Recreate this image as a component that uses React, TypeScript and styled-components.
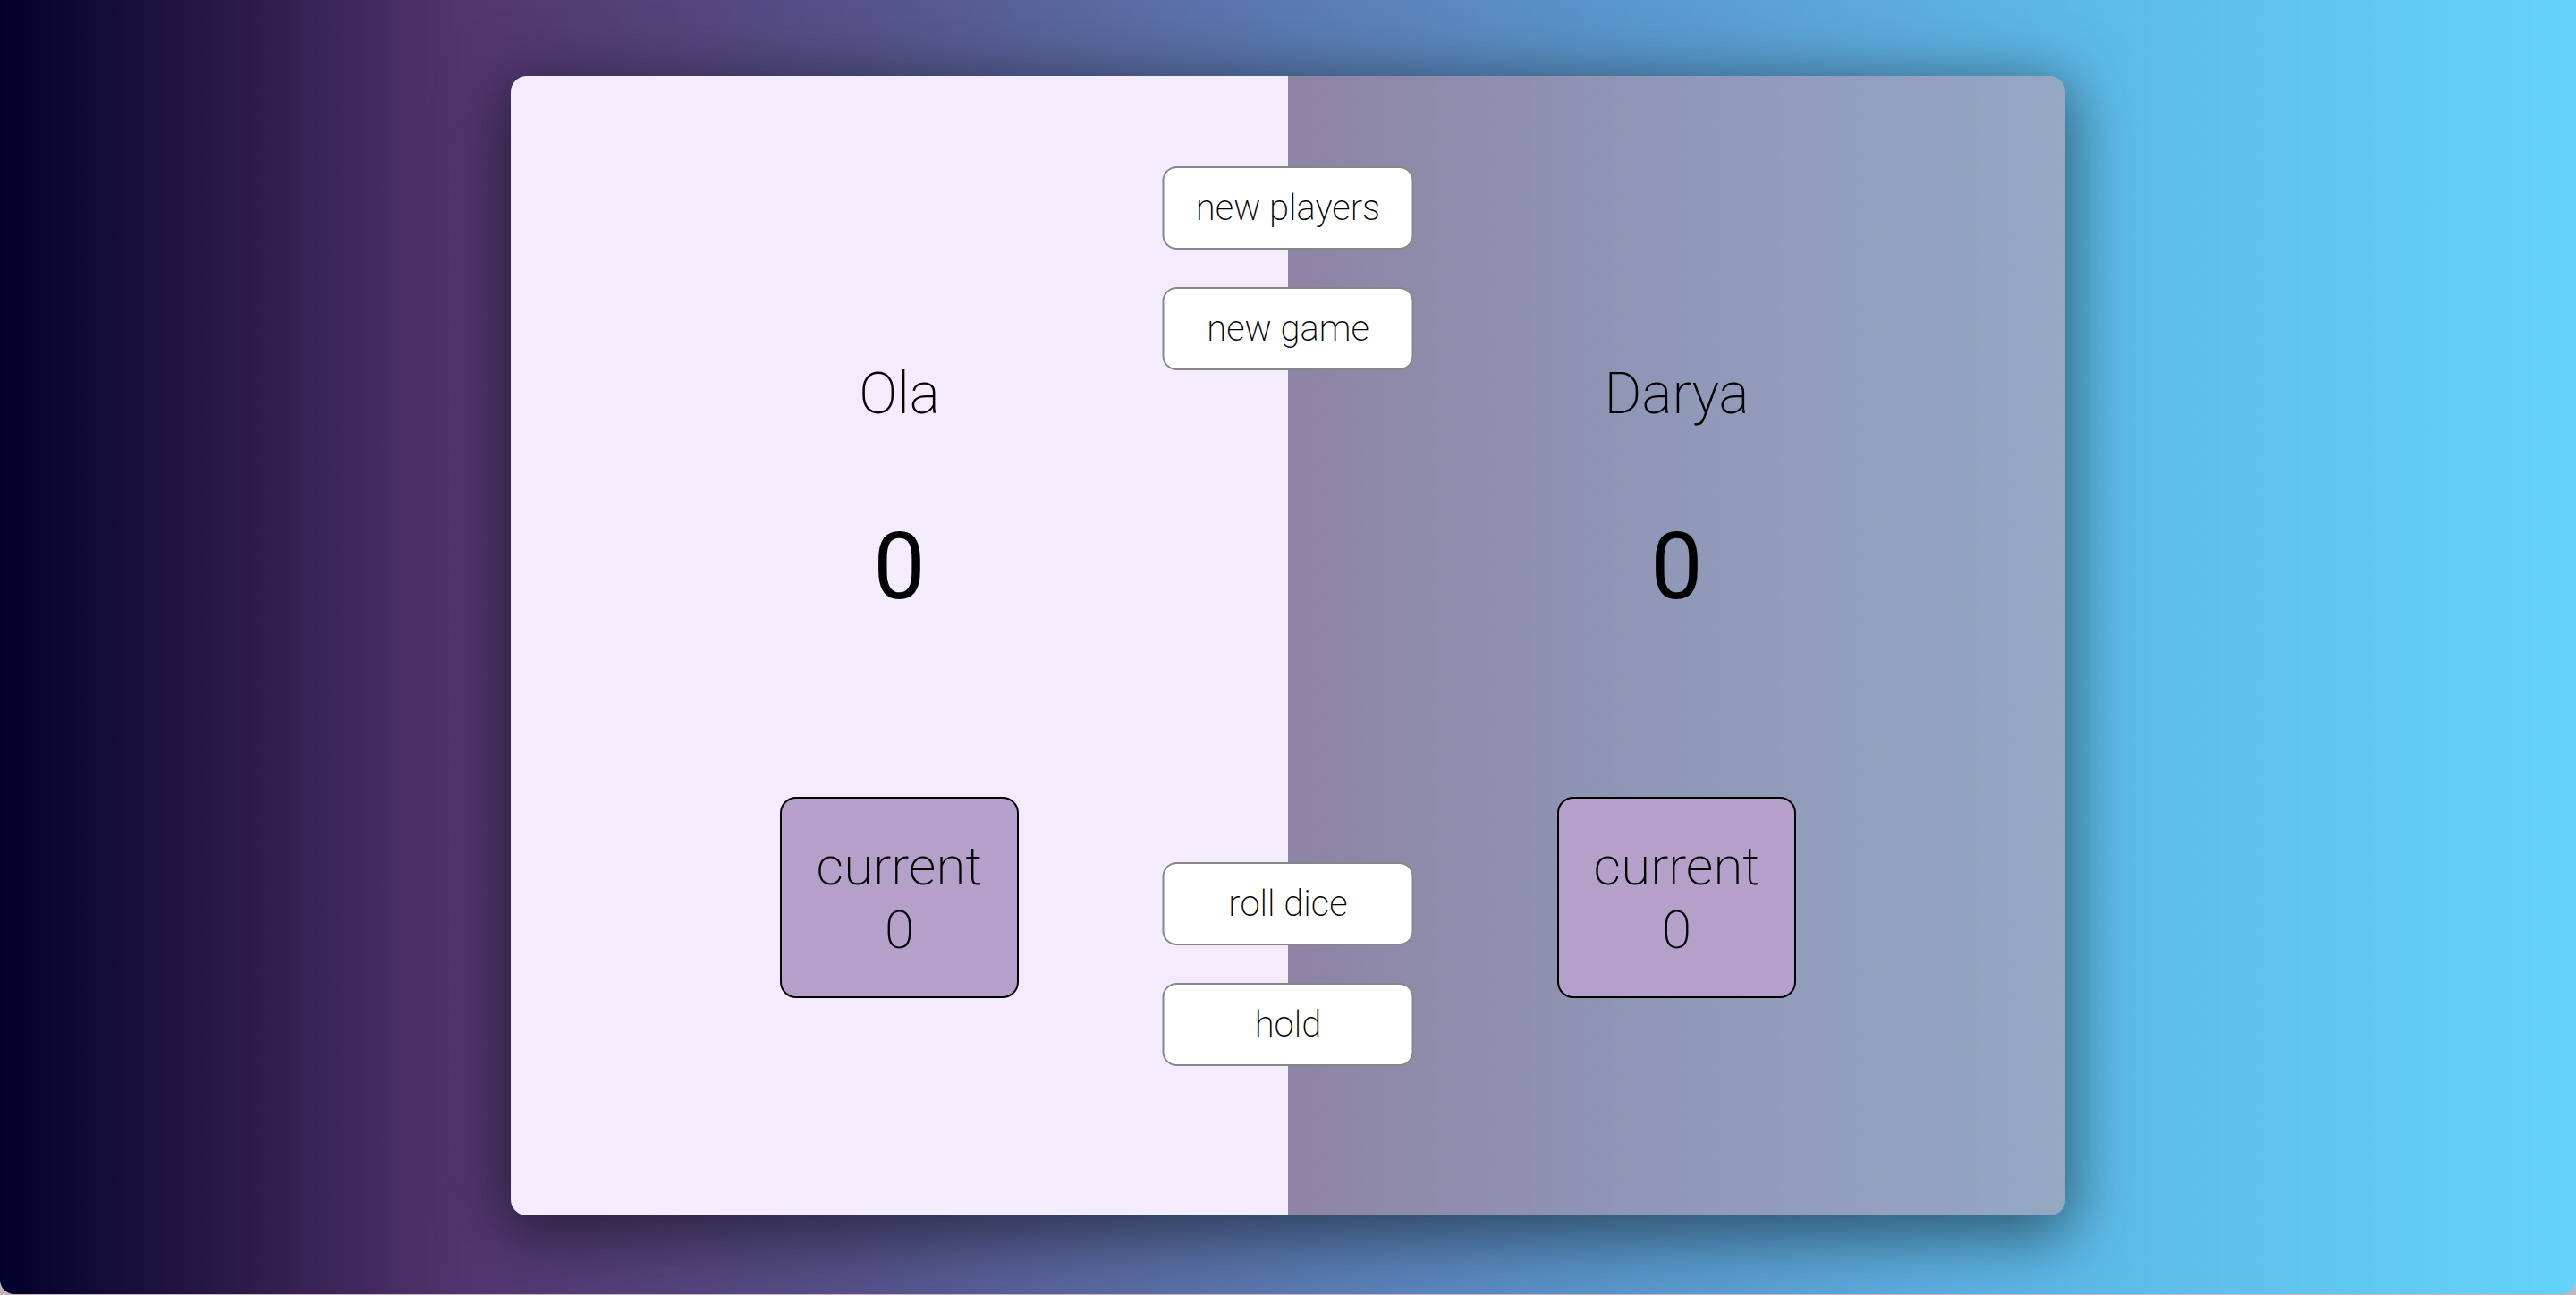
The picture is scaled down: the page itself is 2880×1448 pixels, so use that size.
import React from "react";
import styled, { createGlobalStyle } from "styled-components";

const Global = createGlobalStyle`
  html, body {
    margin: 0;
    padding: 0;
    background: #c9b4bd;
  }
  body {
    font-family: Roboto, "Liberation Sans", sans-serif;
  }
  * { box-sizing: border-box; }
`;

const Page = styled.div`
  height: 1447px;
  border-radius: 0 0 16px 16px;
  background: linear-gradient(
    90deg,
    #01012a 0%,
    #2a1a48 9%,
    #52356f 18%,
    #555189 33%,
    #5a6fa6 45%,
    #5a95cb 62%,
    #5db8e6 80%,
    #63d3f9 100%
  );
  display: flex;
  justify-content: center;
  padding-top: 85px;
`;

const Board = styled.main`
  position: relative;
  width: 1738px;
  height: 1274px;
  border-radius: 18px;
  overflow: hidden;
  display: flex;
  box-shadow: 0 15px 70px 8px rgba(0, 0, 0, 0.5);
`;

const Panel = styled.section<{ $active?: boolean }>`
  flex: 1;
  display: flex;
  flex-direction: column;
  align-items: center;
  padding-top: 318px;
  background: ${(p) =>
    p.$active
      ? "#f4ecfd"
      : "linear-gradient(90deg, #8e84a5 0%, #9098b7 50%, #94a8c2 100%)"};
`;

const Name = styled.h2`
  margin: 0;
  font-size: 64px;
  font-weight: 200;
  color: #000;
  line-height: normal;
`;

const Score = styled.p`
  margin: 95px 0 0;
  font-size: 104px;
  font-weight: 400;
  color: #000;
  line-height: normal;
`;

const Current = styled.div`
  margin-top: 197px;
  width: 267px;
  height: 225px;
  padding-top: 40px;
  border: 2px solid #000;
  border-radius: 18px;
  background: #b4a0c8;
  display: flex;
  flex-direction: column;
  align-items: center;
  font-size: 60px;
  font-weight: 200;
  line-height: normal;
  color: #000;
`;

const Controls = styled.div<{ $top: number }>`
  position: absolute;
  left: 50%;
  top: ${(p) => p.$top}px;
  transform: translateX(-50%);
  display: flex;
  flex-direction: column;
  gap: 42px;
`;

const Btn = styled.button`
  width: 281px;
  height: 93px;
  border: 2px solid #878787;
  border-radius: 16px;
  background: #fff;
  font-family: Roboto, "Liberation Sans", sans-serif;
  font-size: 40px;
  font-weight: 200;
  color: #000;
  cursor: pointer;
  padding: 0;
`;

const players = [
  { name: "Ola", score: 0, current: 0, active: true },
  { name: "Darya", score: 0, current: 0, active: false },
];

export default function App() {
  return (
    <>
      <Global />
      <Page>
        <Board>
          {players.map((p) => (
            <Panel key={p.name} $active={p.active}>
              <Name>{p.name}</Name>
              <Score>{p.score}</Score>
              <Current>
                <span>current</span>
                <span>{p.current}</span>
              </Current>
            </Panel>
          ))}
          <Controls $top={101}>
            <Btn>new players</Btn>
            <Btn>new game</Btn>
          </Controls>
          <Controls $top={879}>
            <Btn>roll dice</Btn>
            <Btn>hold</Btn>
          </Controls>
        </Board>
      </Page>
    </>
  );
}
